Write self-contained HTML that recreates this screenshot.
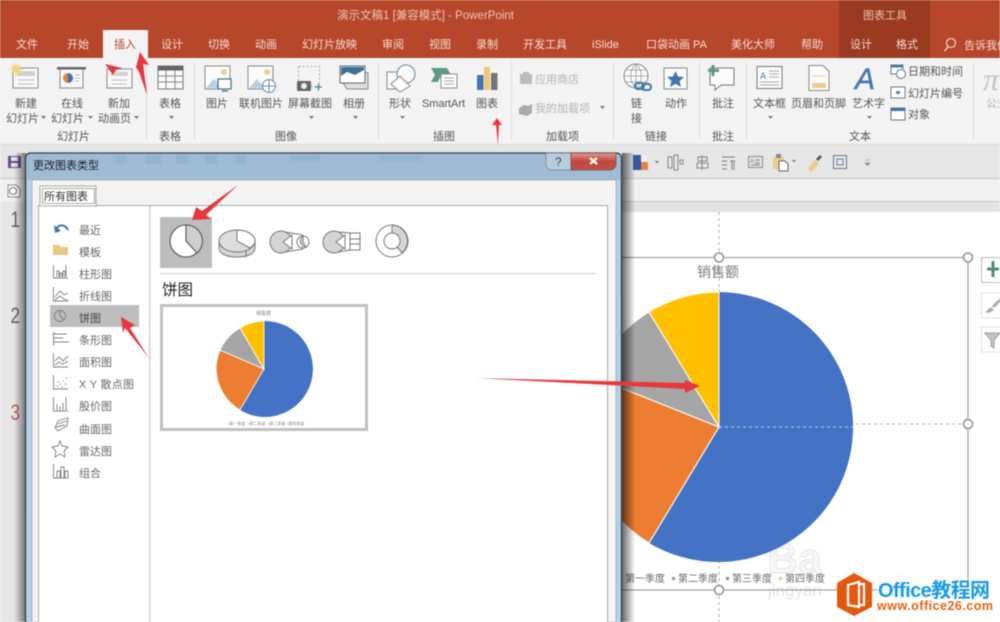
<!DOCTYPE html>
<html><head><meta charset="utf-8"><style>
html,body{margin:0;padding:0;background:#fff;width:1000px;height:622px;overflow:hidden}
svg{display:block;filter:blur(.45px)}
text{font-family:"Liberation Sans","Noto Sans CJK SC",sans-serif;font-size:11px;fill:#555}
.t text{fill:#f6dcd3}
.g text{fill:#aaa}
.l text{fill:#666}
.ic{fill:none;stroke:#7d7d7d;stroke-width:.9}
</style></head><body>
<svg width="1000" height="622" viewBox="0 0 1000 622" xmlns="http://www.w3.org/2000/svg">
<defs>
<linearGradient id="sl" x1="0" x2="1" y1="0" y2="0"><stop offset="0" stop-color="#000" stop-opacity="0"/><stop offset="1" stop-color="#000" stop-opacity=".5"/></linearGradient>
<linearGradient id="sr" x1="0" x2="1" y1="0" y2="0"><stop offset="0" stop-color="#000" stop-opacity=".6"/><stop offset="1" stop-color="#000" stop-opacity="0"/></linearGradient>
<linearGradient id="tb" x1="0" x2="0" y1="0" y2="1"><stop offset="0" stop-color="#9fbbd3"/><stop offset=".5" stop-color="#afc9df"/><stop offset="1" stop-color="#bcd4e8"/></linearGradient>
<linearGradient id="cl" x1="0" x2="0" y1="0" y2="1"><stop offset="0" stop-color="#d99a90"/><stop offset=".5" stop-color="#c4473c"/><stop offset="1" stop-color="#b9524a"/></linearGradient>
</defs>

<!-- title bar -->
<rect width="1000" height="58" fill="#b7472a"/>
<rect x="839" width="91" height="58" fill="#9a3a20"/>
<rect x="103" y="30" width="45" height="28" fill="#f3f3f3"/>
<text x="337" y="19" style="fill:#eec4b6;font-size:11.5px" textLength="177">演示文稿1 [兼容模式] - PowerPoint</text>
<text x="863" y="19" style="fill:#efc0b0">图表工具</text>
<g class="t">
<text x="16" y="48">文件</text><text x="67" y="48">开始</text>
<text x="114" y="48" style="fill:#b7472a">插入</text>
<text x="161" y="48">设计</text><text x="208" y="48">切换</text><text x="255" y="48">动画</text>
<text x="302" y="48">幻灯片放映</text><text x="382" y="48">审阅</text><text x="429" y="48">视图</text><text x="476" y="48">录制</text>
<text x="523" y="48">开发工具</text><text x="592" y="48">iSlide</text><text x="646" y="48">口袋动画 PA</text>
<text x="731" y="48">美化大师</text><text x="801" y="48">帮助</text><text x="850" y="48">设计</text><text x="896" y="48">格式</text>
<text x="964" y="49">告诉我你</text>
</g>
<circle cx="951" cy="43" r="4.5" fill="none" stroke="#f6dcd3" stroke-width="1.1"/><path d="M948 47l-3.500 4" stroke="#f6dcd3" stroke-width="1.300"/>

<!-- ribbon -->
<rect y="58" width="1000" height="87" fill="#f3f3f3"/>
<path d="M146.500 62V140M194.500 62V140M378.500 62V140M511.500 62V140M613.500 62V140M699.500 62V140M746.500 62V140M973.500 62V140" stroke="#dcdcdc"/>
<rect y="144" width="1000" height="1" fill="#d6d6d6"/>

<!-- ribbon text -->
<text x="15" y="107">新建</text><text x="6" y="122">幻灯片</text>
<text x="61" y="107">在线</text><text x="51" y="122">幻灯片</text>
<text x="108" y="107">新加</text><text x="98" y="122">动画页</text>
<text x="159" y="107">表格</text>
<text x="206" y="107">图片</text><text x="239" y="107">联机图片</text><text x="288" y="107">屏幕截图</text>
<text x="343" y="107">相册</text><text x="389" y="107">形状</text>
<text x="422" y="107" textLength="43">SmartArt</text><text x="476" y="107">图表</text>
<text x="535" y="83" style="fill:#b4b4b4">应用商店</text><text x="535" y="112" style="fill:#b4b4b4">我的加载项</text>
<text x="631" y="107">链</text><text x="631" y="122">接</text>
<text x="665" y="107">动作</text><text x="712" y="107">批注</text>
<text x="753" y="107">文本框</text><text x="791" y="107">页眉和页脚</text><text x="852" y="107">艺术字</text>
<text x="908" y="75">日期和时间</text><text x="908" y="97">幻灯片编号</text><text x="908" y="118">对象</text>
<text x="986" y="107" style="fill:#b4b4b4">公式</text>
<text x="57" y="140">幻灯片</text><text x="159" y="140">表格</text><text x="275" y="140">图像</text><text x="433" y="140">插图</text>
<text x="546" y="140">加载项</text><text x="645" y="140">链接</text><text x="712" y="140">批注</text><text x="849" y="140">文本</text>

<!-- small dropdown carets -->
<path d="M41 116h5l-2.500 3zM88 116h5l-2.500 3zM134 116h5l-2.500 3zM169 116h5l-2.500 3zM309 116h5l-2.500 3zM353 116h5l-2.500 3zM400 116h5l-2.500 3zM600 106h5l-2.500 3zM768 116h5l-2.500 3zM867 116h5l-2.500 3z" fill="#777"/>

<!-- ribbon icons -->
<rect x="13" y="68" width="25" height="20" fill="#f8f8f8" stroke="#8a8a8a"/><rect x="17" y="71" width="18" height="5" fill="#d0d0d0"/><path d="M18 80h16M18 84h16" stroke="#bbb"/>
<circle cx="16" cy="69" r="4" fill="#f2d67a"/><path d="M16 62v14M9 69h14M11 64l10 10M21 64l-10 10" stroke="#f2d67a"/>
<rect x="60" y="69" width="23" height="19" fill="#f8f8f8" stroke="#888"/><rect x="57" y="67" width="29" height="2.500" fill="#666"/>
<circle cx="68" cy="78" r="5" fill="#e8833a"/><path d="M68 78V73a5 5 0 0 1 0 10z" fill="#3c6fb5"/><path d="M75 75h5M75 78h5M75 81h4" stroke="#bbb"/>
<rect x="107" y="69" width="25" height="19" fill="#f8f8f8" stroke="#888"/><rect x="111" y="72" width="17" height="4" fill="#d2d2d2"/><path d="M112 80h15M112 84h15" stroke="#bbb"/>
<rect x="158" y="66" width="25" height="23" fill="#fafafa" stroke="#777"/><rect x="158" y="66" width="25" height="4.500" fill="#666"/><path d="M158 76h25M158 82h25M166 70v19M175 70v19" stroke="#888"/>
<rect x="205" y="66" width="25" height="23" fill="#fcfcfc" stroke="#888"/><path d="M206 88l8-9 8 9z" fill="#b8cfe0"/><circle cx="224" cy="72" r="3" fill="#eccd8c"/><rect x="218" y="79" width="13" height="10" fill="#fff" stroke="#3f6d8e" stroke-width="1.200"/><path d="M222 91h6" stroke="#3f6d8e" stroke-width="1.300"/>
<rect x="248" y="66" width="25" height="23" fill="#fcfcfc" stroke="#888"/><path d="M249 88l8-9 8 9z" fill="#b8cfe0"/><circle cx="267" cy="72" r="3" fill="#eccd8c"/><circle cx="269" cy="86" r="6.500" fill="#fff" stroke="#5c8eb0"/><path d="M262.500 86h13M269 79.500v13" stroke="#5c8eb0"/>
<rect x="298.500" y="66.500" width="21" height="20" fill="none" stroke="#aaa" stroke-dasharray="2 2"/><rect x="297" y="81" width="14" height="10" rx="1" fill="#666"/><circle cx="304" cy="86" r="3" fill="#eee"/><path d="M315 87h7M318.500 83.500v7" stroke="#4a87a8" stroke-width="1.300"/>
<path d="M343 83l4 6h21V73l-3-1" fill="#ddd" stroke="#888"/><rect x="340" y="66" width="25" height="17" fill="#fff" stroke="#666"/><path d="M341 76l6-4 8 3 9-5v-3h-23z" fill="#3f7196"/>
<rect x="387" y="72" width="17" height="17" fill="#fafafa" stroke="#888"/><circle cx="406" cy="74" r="9" fill="#fafafa" stroke="#5c87a8"/><path d="M400 76l10 10-10 6-9-8z" fill="#fff" stroke="#888"/>
<path d="M431 68h16l5 9h-12l-2 5H431l4-7z" fill="#5f9a87"/><rect x="441" y="74" width="16" height="14" fill="#fdfdfd" stroke="#888"/><path d="M444 78h10M444 81h10M444 84h10" stroke="#aaa"/>
<rect x="477" y="75" width="6.500" height="15" fill="#3f76b0"/><rect x="484" y="67" width="6" height="23" fill="#ebc87c"/><rect x="491" y="73" width="6.500" height="17" fill="#757575"/>
<path d="M520 74h12v10h-12zM523 74v-2h6v2" fill="#bbb"/>
<path d="M519 108l5-3 4 1 4-2v9l-5 3-4-1-4-1z" fill="#aaa"/>
<circle cx="636" cy="76" r="12" fill="#fbfbfb" stroke="#888"/><path d="M624 76h24M636 64v24M626 70h20M626 82h20M636 64c-7 6-7 18 0 24M636 64c7 6 7 18 0 24" stroke="#999" fill="none" stroke-width=".8"/>
<rect x="635" y="83" width="9" height="6" rx="3" fill="none" stroke="#3a77a6" stroke-width="2"/><rect x="642" y="84" width="9" height="6" rx="3" fill="none" stroke="#3a77a6" stroke-width="2"/>
<rect x="664" y="68" width="23" height="21" fill="#fbfbfb" stroke="#888"/><path d="M675.500 71l2.500 5.500 6 .5-4.500 4 1.500 6-5.500-3.200-5.500 3.200 1.500-6-4.500-4 6-.5z" fill="#3f76b0"/>
<path d="M710 68h24v17h-13l-6 5v-5h-5z" fill="#fbfbfb" stroke="#777"/><path d="M713 65v11M708 70.500h11" stroke="#5f9a87" stroke-width="3"/>
<rect x="757" y="66.500" width="25" height="22" fill="#fbfbfb" stroke="#777"/><text x="760" y="79" style="font-size:9px;fill:#3f76b0">A</text><path d="M769 71h10M769 74h10M769 77h10M760 82h19M760 85h19" stroke="#aaa"/>
<path d="M809 65.500h14l6 6v19h-20z" fill="#fbfbfb" stroke="#888"/><rect x="812" y="83" width="14" height="5" fill="#eccd8c"/><rect x="812" y="75" width="14" height="2" fill="#f4e3bc"/>
<text x="855" y="89" style="font-size:30px;font-style:italic;fill:#4478ad;stroke:#4478ad;stroke-width:.4">A</text>
<rect x="891" y="65" width="12" height="9" fill="#fff" stroke="#777"/><rect x="891" y="65" width="12" height="2.500" fill="#4a7a9c"/><circle cx="901" cy="74" r="4.500" fill="#fff" stroke="#4a7a9c"/>
<rect x="891" y="87" width="14" height="11" fill="#fff" stroke="#777"/><rect x="896" y="91" width="4" height="3" fill="#5a8aa8"/>
<rect x="891" y="108" width="14" height="12" fill="#fff" stroke="#777"/><rect x="891" y="108" width="14" height="3" fill="#3f76a8"/>
<text x="983" y="90" style="font-family:'Liberation Serif',serif;font-size:32px;font-style:italic;fill:#c4c4c4">π</text>

<!-- QAT & sub row -->
<rect y="145" width="1000" height="33" fill="#e6e6e6"/>
<rect y="178" width="1000" height="1" fill="#c8c8c8"/>
<rect y="179" width="1000" height="22" fill="#f1f1f1"/>
<rect y="201" width="1000" height="1" fill="#c4c4c4"/>
<rect y="202" width="1000" height="10" fill="#e2e2e2"/>
<rect y="212" width="1000" height="410" fill="#fff"/>
<rect y="202" width="25" height="420" fill="#e6e6e6"/>
<rect y="179" width="25" height="23" fill="#f1f1f1"/>
<rect x="8" y="156" width="13" height="12" fill="#6a4f8c"/><rect x="11" y="157" width="7" height="4" fill="#e6e6e6"/><rect x="11" y="163" width="7" height="4" fill="#e6e6e6"/>
<path d="M8 185h8l4 4v8H8z" fill="#fff" stroke="#888"/><circle cx="13" cy="191" r="3.500" fill="none" stroke="#777"/>
<text transform="translate(10.500,227) scale(.78,1)" style="font-size:22px;fill:#666">1</text>
<text transform="translate(10.500,323) scale(.78,1)" style="font-size:22px;fill:#666">2</text>
<text transform="translate(10.500,420) scale(.78,1)" style="font-size:22px;fill:#c0645a">3</text>

<!-- QAT icons right -->
<rect x="633" y="155" width="15" height="15" fill="#335a9a"/><rect x="641" y="155" width="7" height="7" fill="#eee"/><rect x="641" y="162" width="7" height="8" fill="#e8833a"/><path d="M655 161h4l-2 2.500z" fill="#777"/>
<g class="ic"><rect x="668" y="157" width="4" height="11"/><rect x="674" y="155" width="4" height="15"/><rect x="680" y="160" width="3" height="4"/>
<path d="M702 155v15" /><rect x="698" y="157" width="9" height="4"/><rect x="697" y="163" width="11" height="5"/>
<path d="M722 157h13M722 161h5M722 165h5M722 169h5M730 161h5M732 161v9M734 161v9"/>
<rect x="748.500" y="156.500" width="14" height="11"/><path d="M755 160h5M755 163h5M751 165h9"/></g>
<text x="750" y="163" style="font-size:6px;fill:#777">A</text>
<rect x="773" y="157" width="11" height="12" fill="#eccd8c"/><rect x="776" y="154" width="5" height="4" fill="#888"/><path d="M779 161h6l3 3v7h-9z" fill="#fff" stroke="#666"/><path d="M792 160h4l-2 2.500z" fill="#777"/>
<path d="M808 168l7-8 4 4-8 8z" fill="#eccd8c"/><path d="M816 159l4-4 2 2-4 4z" fill="#555"/>
<rect x="833.500" y="155.500" width="13" height="13" fill="none" stroke="#777"/><rect x="837" y="159" width="6" height="6" fill="none" stroke="#5a8aa8"/>
<path d="M865 160h5M865 163h5l-2.500 2.500z" fill="#888" stroke="#888" stroke-width=".6"/>

<!-- Baidu watermark (behind the pie) -->
<text x="767" y="573" style="font-size:43px;font-weight:bold;fill:#f6f6f6;stroke:#dedede;stroke-width:.7">Ba</text>
<text x="768" y="596" style="font-size:17px;fill:#e4e4e4">jingyan</text>

<!-- chart -->
<path d="M719 212V622M622 424H968" stroke="#aaa" stroke-dasharray="3 3" fill="none"/>
<path d="M719 427L719 292A135 135 0 1 1 649 543Z" fill="#4472c4"/>
<path d="M719 427L649 543A135 135 0 0 1 594 377Z" fill="#ed7d31" stroke="#fff" stroke-width="1"/>
<path d="M719 427L594 377A135 135 0 0 1 649 312Z" fill="#a5a5a5" stroke="#fff" stroke-width="1"/>
<path d="M719 427L649 312A135 135 0 0 1 719 292Z" fill="#ffc000" stroke="#fff" stroke-width="1"/>
<path d="M719 292V427M719 427L649 543" stroke="#fff" stroke-width="1"/>
<path d="M719 427H853" stroke="#bcd" stroke-dasharray="3 3"/>
<path d="M622 257.500H968V590H622" fill="none" stroke="#8f8f8f" stroke-width="1"/>
<text x="697" y="277" style="font-size:14px;fill:#7a7a7a">销售额</text>
<text x="625" y="582" style="font-size:10px;fill:#6a6a6a">第一季度</text><text x="678" y="582" style="font-size:10px;fill:#6a6a6a">第二季度</text><text x="732" y="582" style="font-size:10px;fill:#6a6a6a">第三季度</text><text x="785" y="582" style="font-size:10px;fill:#6a6a6a">第四季度</text>
<rect x="672" y="577" width="3" height="3" fill="#b08d70"/><rect x="726" y="577" width="3" height="3" fill="#888"/><rect x="779" y="577" width="3" height="3" fill="#e6cc77"/>
<g fill="#fff" stroke="#8f8f8f" stroke-width="1.500"><circle cx="719" cy="257.500" r="4.500"/><circle cx="968" cy="257.500" r="4.500"/><circle cx="968" cy="424" r="4.500"/><circle cx="719" cy="590" r="4.500"/></g>
<rect x="981.500" y="257.500" width="20" height="25" fill="#fff" stroke="#bbb"/>
<path d="M993 261v16M987 269h12" stroke="#4f8c7b" stroke-width="3"/>
<rect x="981.500" y="293" width="20" height="25" fill="#fff" stroke="#e0e0e0"/>
<path d="M985 312l6-5 3 3-5 3zM992 306l8-8 1 3-7 7z" fill="#aaa"/>
<rect x="981.500" y="327" width="20" height="25" fill="#fff" stroke="#e0e0e0"/>
<path d="M985 333h15l-6 7v8l-3-2v-6z" fill="#c4c4c4" stroke="#999"/>

<!-- dialog -->
<rect x="14" y="153" width="12" height="469" fill="url(#sl)"/>
<rect x="622" y="153" width="13" height="469" fill="url(#sr)"/>
<path d="M25.500 622V158a5 5 0 0 1 5-5H616.500a5 5 0 0 1 5 5V622Z" fill="url(#tb)" stroke="#33424d" stroke-width="1.300"/>
<g fill="#8fadc7" opacity=".5"><rect x="115" y="155" width="12" height="9"/><rect x="145" y="155" width="16" height="9"/><rect x="176" y="155" width="12" height="9"/><rect x="205" y="155" width="12" height="9"/><rect x="236" y="155" width="10" height="9"/><rect x="290" y="155" width="30" height="6"/><rect x="380" y="155" width="40" height="6"/></g>
<rect x="27" y="180" width="5" height="442" fill="#b7d0e6"/>
<rect x="616" y="180" width="4.500" height="442" fill="#b7d0e6"/>
<rect x="32" y="180" width="584" height="442" fill="#f3f3f3" stroke="#8a9ba8" stroke-width=".6"/>
<rect x="38.500" y="205.500" width="569" height="420" fill="#fff" stroke="#a8a8a8"/>
<rect x="40" y="186" width="56" height="20" fill="#fff" stroke="#a8a8a8"/>
<rect x="42.500" y="188.500" width="52" height="15" fill="none" stroke="#555" stroke-dasharray="1 1"/>
<text x="44" y="200" style="font-size:11px;fill:#333">所有图表</text>
<text x="33" y="169" style="font-size:11px;fill:#222">更改图表类型</text>
<path d="M546 153h25v17h-19a6 6 0 0 1-6-6z" fill="#b9ccdc" stroke="#6c7f90" stroke-width=".7"/>
<text x="555" y="166" style="font-size:12px;fill:#445">?</text>
<path d="M571 153h45v11a6 6 0 0 1-6 6h-39z" fill="url(#cl)" stroke="#7a4a48" stroke-width=".7"/>
<path d="M590 158l7 6M597 158l-7 6" stroke="#fff" stroke-width="2.200"/>
<rect x="149" y="206" width="1.500" height="416" fill="#cfcfcf"/>

<!-- list -->
<rect x="50" y="305" width="89" height="22" fill="#bdbdbd"/>
<g class="l">
<text x="79" y="234">最近</text><text x="79" y="256">模板</text><text x="79" y="278">柱形图</text><text x="79" y="300">折线图</text>
<text x="79" y="322" style="fill:#444">饼图</text><text x="79" y="344">条形图</text><text x="79" y="366">面积图</text><text x="79" y="388" textLength="55">X Y 散点图</text>
<text x="79" y="410">股价图</text><text x="79" y="433">曲面图</text><text x="79" y="455">雷达图</text><text x="79" y="477">组合</text>
</g>
<path d="M56 229c3-5 9-5 12 1" fill="none" stroke="#3f7a9e" stroke-width="2"/><path d="M54 225l1 8 6-2z" fill="#3f7a9e"/>
<path d="M53 245h6l2 2h7v8H53z" fill="#e9c77e"/>
<g class="ic">
<path d="M53.500 265v13H68"/><path d="M57 277v-6h2v6M60 277v-4h2v4M63 277v-6h2v6M66 277v-12"/>
<path d="M53.500 287v14H68M55 297l5-6 4 4 4-2M55 300l5-4 4 3 4 1"/>
<circle cx="60" cy="316" r="5.500"/><path d="M60 316v-5.500M60 316l4 4"/>
<path d="M53.500 332v14M54 334h13M54 338h9M54 342h15"/>
<path d="M53.500 353v14H68M55 361l4-4 4 4 5-5M55 365l4-3 4 2 5-3"/>
<path d="M53.500 375v14H68"/><path d="M57 386h1M60 384h1M63 381h1M66 378h1M58 382h1M62 387h1M65 384h1" stroke-width="1.500"/>
<path d="M53.500 397v14H68M57 410v-6M60 410v-4M63 410v-7M66 410v-13"/>
<path d="M55 428l3-7 10-3-1 8-9 5zM58 424l9-3M56 427l9-2"/>
<path d="M60 441l2 5 6 1-4 4 1 6-5-3-5 3 1-6-4-4 6-1z"/>
<path d="M53.500 464v14H68M57 478v-7h3v7M61 478v-11h3v11M65 478v-7h3v7"/>
</g>

<!-- chart type icons -->
<rect x="160" y="217" width="52" height="51" fill="#bdbdbd"/>
<circle cx="186" cy="241" r="16" fill="#fff" stroke="#555" stroke-width="1.100"/>
<path d="M186 241V225A16 16 0 0 1 197 253Z" fill="#cfcfcf" stroke="#555" stroke-width="1.100"/>
<path d="M219 241v7c0 6 8 9 18 9s18-3 18-9v-7" fill="#d4d4d4" stroke="#777"/>
<ellipse cx="237" cy="241" rx="18" ry="11" fill="#dcdcdc" stroke="#777"/>
<path d="M237 241v-11A18 11 0 0 1 255 241c0 3-2 5-5 7z" fill="#fff" stroke="#777"/><path d="M246 250v7" stroke="#777"/>
<circle cx="281" cy="242" r="11" fill="#d4d4d4" stroke="#777"/><path d="M292 235l-9 7 9 7z" fill="#fff" stroke="#777"/>
<path d="M285 232l18 3M285 252l18-3" stroke="#777"/>
<circle cx="303" cy="242" r="6" fill="#fff" stroke="#777"/><path d="M303 236v6l3 5A6 6 0 0 1 303 236" fill="#d4d4d4" stroke="#777"/>
<circle cx="334" cy="242" r="11" fill="#d4d4d4" stroke="#777"/><path d="M345 235l-9 7 9 7z" fill="#fff" stroke="#777"/>
<rect x="350" y="233" width="10" height="17" fill="#fff" stroke="#777"/><path d="M350 239h10M350 244h10M339 232l11 1M339 252l11-2" stroke="#777"/>
<circle cx="392" cy="241" r="16" fill="#fff" stroke="#777"/><path d="M392 225A16 16 0 0 1 402 253L397 247A8 8 0 0 0 392 233Z" fill="#d4d4d4" stroke="#777"/><circle cx="392" cy="241" r="8" fill="#fff" stroke="#777"/>
<rect x="160" y="273" width="436" height="1" fill="#d0d0d0"/>
<text x="162" y="295" style="font-size:15.500px;fill:#222">饼图</text>

<!-- preview -->
<rect x="161.500" y="305.500" width="205" height="124" fill="#fff" stroke="#c0c0c0" stroke-width="3"/>
<path d="M264 369V321A48 48 0 1 1 240 410Z" fill="#4472c4"/>
<path d="M264 369L240 410A48 48 0 0 1 220 350Z" fill="#ed7d31" stroke="#fff" stroke-width=".8"/>
<path d="M264 369L220 350A48 48 0 0 1 240 328Z" fill="#a5a5a5" stroke="#fff" stroke-width=".8"/>
<path d="M264 369L240 328A48 48 0 0 1 264 321Z" fill="#ffc000" stroke="#fff" stroke-width=".8"/>
<text x="256" y="315" style="font-size:5px;fill:#888">销售额</text>
<text x="228" y="425" style="font-size:4px;fill:#888">▪第一季度</text><text x="248" y="425" style="font-size:4px;fill:#888">▪第二季度</text><text x="268" y="425" style="font-size:4px;fill:#888">▪第三季度</text><text x="287" y="425" style="font-size:4px;fill:#888">▪第四季度</text>

<!-- red arrows -->
<g fill="#e8383d">
<path d="M140 52L149 65L143 64L147 95L139 72L136 67Z"/>
<path d="M105 64L122 68L116 70L113 75Z"/>
<path d="M497 118L502 125L499 125L498 145L496 125L492 125Z"/>
<path d="M192 220L196 207L202 211L238 185L206 215L211 219Z"/>
<path d="M121 317L135 325L130 328L149 358L125 328L123 333Z"/>
<path d="M476 378L685 383L685 380L700 386L685 393L685 389Z"/>
</g>

<!-- logo -->
<path d="M854 573L872 583V607L854 616L837 607V583Z" fill="#e2580f"/>
<path d="M848 585l11-3v25l-11-2zM859 584h5v21h-5" fill="none" stroke="#fff" stroke-width="2.200"/>
<rect x="877" y="580" width="116" height="34" fill="#fff" fill-opacity=".75"/>
<text x="878" y="597" style="font-size:20px;font-weight:bold;fill:#1a9ce8" textLength="112">Office教程网</text>
<text x="877" y="610" style="font-size:12.500px;font-weight:bold;fill:#e5620f" textLength="116">www.office26.com</text>
</svg>
</body></html>
